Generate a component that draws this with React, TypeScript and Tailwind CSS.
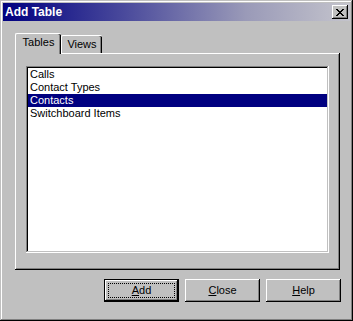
const items = ['Calls', 'Contact Types', 'Contacts', 'Switchboard Items']

function CloseGlyph() {
  return (
    <svg width="8" height="7" viewBox="0 0 8 7" shapeRendering="crispEdges">
      <path
        fill="#000"
        d="M0 0h2v1H0zM6 0h2v1H6zM1 1h2v1H1zM5 1h2v1H5zM2 2h4v1H2zM3 3h2v1H3zM2 4h4v1H2zM1 5h2v1H1zM5 5h2v1H5zM0 6h2v1H0zM6 6h2v1H6z"
      />
    </svg>
  )
}

function PushButton({
  label,
  hot,
  isDefault,
}: {
  label: string
  hot: string
  isDefault?: boolean
}) {
  const rest = label.slice(hot.length)
  if (isDefault) {
    return (
      <div className="w-[75px] h-[23px] flex bg-[#c0c0c0] shadow-[inset_0_0_0_1px_#000,inset_-2px_-2px_#000,inset_2px_2px_#fff,inset_-3px_-3px_#808080]">
        <div className="flex-1 m-[4px] border border-dotted border-black flex items-center justify-center">
          <span>
            <span className="underline underline-offset-1">{hot}</span>
            {rest}
          </span>
        </div>
      </div>
    )
  }
  return (
    <div className="w-[75px] h-[23px] flex items-center justify-center bg-[#c0c0c0] shadow-[inset_-1px_-1px_#000,inset_1px_1px_#fff,inset_-2px_-2px_#808080]">
      <span>
        <span className="underline underline-offset-1">{hot}</span>
        {rest}
      </span>
    </div>
  )
}

export default function App() {
  return (
    <div className="w-[353px] h-[321px] p-[3px] flex flex-col bg-[#c0c0c0] text-[11px] leading-[13px] text-black font-['Liberation_Sans',Arial,sans-serif] shadow-[inset_-1px_-1px_#000,inset_1px_1px_#c0c0c0,inset_-2px_-2px_#808080,inset_2px_2px_#fff]">
      {/* Title bar */}
      <div className="h-[18px] flex items-center justify-between pl-[2px] pr-[2px] bg-[linear-gradient(90deg,#000080_0%,#4a4a9c_35%,#9a9ab8_70%,#c4c4cc_100%)]">
        <span className="text-white font-bold text-[12px]">Add Table</span>
        <div className="w-[16px] h-[14px] flex items-center justify-center bg-[#c0c0c0] shadow-[inset_-1px_-1px_#000,inset_1px_1px_#fff,inset_-2px_-2px_#808080]">
          <CloseGlyph />
        </div>
      </div>

      {/* Tab control */}
      <div className="pt-[12px] pl-[12px]">
        <div className="flex items-end h-[20px]">
          <div className="relative z-10 -mb-px w-[46px] h-[21px] pb-[3px] flex items-center justify-center bg-[#c0c0c0] rounded-t-[2px] border-l border-t border-white shadow-[inset_-1px_0_#000,inset_-2px_0_#808080]">
            Tables
          </div>
          <div className="w-[41px] h-[18px] flex items-center justify-center bg-[#c0c0c0] rounded-t-[2px] border-l border-t border-white shadow-[inset_-1px_0_#000,inset_-2px_0_#808080]">
            Views
          </div>
        </div>
        <div className="w-[325px] h-[217px] pt-[13px] pl-[11px] bg-[#c0c0c0] shadow-[inset_-1px_-1px_#000,inset_1px_1px_#fff,inset_-2px_-2px_#808080]">
          <div className="w-[303px] h-[187px] p-[2px] bg-white shadow-[inset_-1px_-1px_#fff,inset_1px_1px_#808080,inset_-2px_-2px_#c0c0c0,inset_2px_2px_#000]">
            {items.map((item) => (
              <div
                key={item}
                className={
                  item === 'Contacts'
                    ? 'h-[13px] pl-[2px] bg-[#000080] text-white'
                    : 'h-[13px] pl-[2px]'
                }
              >
                {item}
              </div>
            ))}
          </div>
        </div>
      </div>

      {/* Buttons */}
      <div className="mt-[9px] pr-[9px] flex justify-end gap-[6px]">
        <PushButton label="Add" hot="A" isDefault />
        <PushButton label="Close" hot="C" />
        <PushButton label="Help" hot="H" />
      </div>
    </div>
  )
}
